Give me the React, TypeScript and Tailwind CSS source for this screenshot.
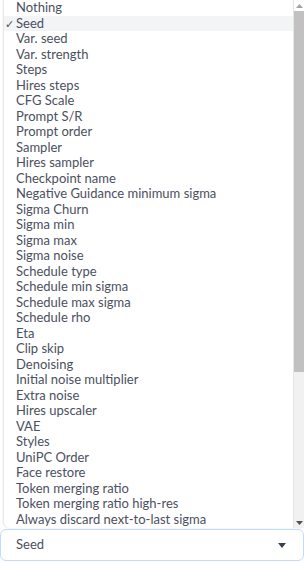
const options = [
  'Nothing',
  'Seed',
  'Var. seed',
  'Var. strength',
  'Steps',
  'Hires steps',
  'CFG Scale',
  'Prompt S/R',
  'Prompt order',
  'Sampler',
  'Hires sampler',
  'Checkpoint name',
  'Negative Guidance minimum sigma',
  'Sigma Churn',
  'Sigma min',
  'Sigma max',
  'Sigma noise',
  'Schedule type',
  'Schedule min sigma',
  'Schedule max sigma',
  'Schedule rho',
  'Eta',
  'Clip skip',
  'Denoising',
  'Initial noise multiplier',
  'Extra noise',
  'Hires upscaler',
  'VAE',
  'Styles',
  'UniPC Order',
  'Face restore',
  'Token merging ratio',
  'Token merging ratio high-res',
  'Always discard next-to-last sigma',
]

function Caret() {
  return (
    <svg width="8" height="5" viewBox="0 0 8 5" className="fill-[#374151]">
      <path d="M0 0h8L4 5z" />
    </svg>
  )
}

export default function App() {
  const selected = 'Seed'

  return (
    <div
      className="flex h-[563px] w-[304px] flex-col overflow-hidden bg-white text-[13px] text-[#4b5060]"
      style={{ fontFamily: 'Lato, "Noto Sans", sans-serif' }}
    >
      <div className="flex h-[528px] pl-[4px]">
        <div className="flex flex-1 rounded-bl-md shadow-[-1px_0_2px_rgba(0,0,0,0.12)]">
          <ul className="flex flex-1 flex-col">
            {options.map((opt) => (
              <li
                key={opt}
                className={`flex h-[15.5px] shrink-0 items-center ${opt === selected ? 'bg-[#f3f4f6]' : ''}`}
              >
                <span className="w-[12px] pl-[1px] text-[11px] leading-none">{opt === selected ? '✓' : ''}</span>
                <span className="leading-none">{opt}</span>
              </li>
            ))}
          </ul>
          <div className="flex w-[11px] flex-col border-l border-[#e5e5e5] bg-[#f1f1f1]">
            <div className="flex h-[11px] items-center justify-center bg-white">
              <svg width="7" height="4" viewBox="0 0 7 4" className="fill-[#a3a3a3]">
                <path d="M0 4h7L3.5 0z" />
              </svg>
            </div>
            <div className="h-[361px] bg-[#c1c1c1]" />
            <div className="flex-1" />
            <div className="flex h-[11px] items-center justify-center">
              <svg width="7" height="4" viewBox="0 0 7 4" className="fill-[#505050]">
                <path d="M0 0h7L3.5 4z" />
              </svg>
            </div>
          </div>
        </div>
      </div>
      <div className="mt-[1px] flex h-[32px] items-center justify-between rounded-md border border-[#bfdbfe] pl-[15px] pr-[17px]">
        <span>{selected}</span>
        <Caret />
      </div>
    </div>
  )
}
